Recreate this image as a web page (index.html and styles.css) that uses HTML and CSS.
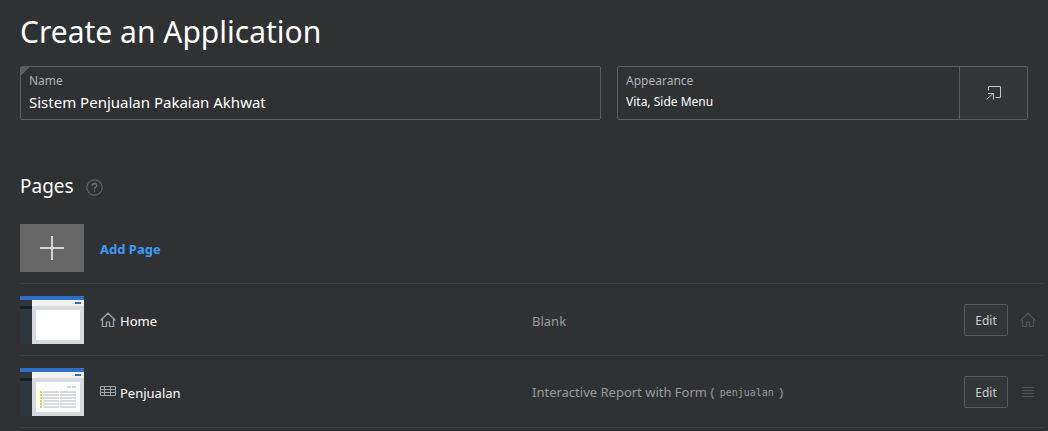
FILE: index.html
```html
<!DOCTYPE html>
<html lang="en">
<head>
<meta charset="utf-8">
<title>Create an Application</title>
<link rel="stylesheet" href="styles.css">
</head>
<body>
<svg class="defs" aria-hidden="true">
  <symbol id="home" viewBox="0 0 16 16">
    <path d="M0.5 8.5 8 1.2l7.500 7.300M2.500 7v7.500h4V10h3v4.500h4V7" fill="none" stroke="currentColor" stroke-width="1.200"/>
  </symbol>
  <symbol id="thumb" viewBox="0 0 64 48">
    <path fill="#d7dbde" d="M0 0h64v48H0z"/>
    <path fill="#2f6fcc" d="M0 0h64v4H0z"/>
    <path fill="#30373c" d="M0 4h12v44H0z"/>
    <path fill="#1b1f22" d="M0 10h12v3H0z"/>
    <path fill="#f0f1f1" d="M12 4h52v6H12z"/>
    <path fill="#2f6fcc" d="M55 6h6v2h-6z"/>
    <path fill="#fff" d="M16 14h44v30H16z"/>
  </symbol>
</svg>
<main>
  <h1 class="title">Create an Application</h1>
  <form class="settings">
    <div class="field required">
      <label class="label" for="name">Name</label>
      <input class="input" id="name" type="text" value="Sistem Penjualan Pakaian Akhwat">
    </div>
    <div class="appearance">
      <div class="field">
        <label class="label" for="appearance">Appearance</label>
        <input class="input small" id="appearance" type="text" value="Vita, Side Menu" readonly>
      </div>
      <button class="picker" type="button" aria-label="Set appearance">
        <svg width="16" height="16" viewBox="0 0 16 16" fill="none" stroke="currentColor"><path d="M2.500 5.500v-4h12v11h-5M.5 14.500l6.500-6M2 8.500h5.500v6"/></svg>
      </button>
    </div>
  </form>
  <section>
    <div class="heading">
      <h2 class="subtitle">Pages</h2>
      <button class="help" type="button" aria-label="Help">
        <svg width="17" height="17" viewBox="0 0 17 17" fill="none" stroke="currentColor"><circle cx="8.500" cy="8.500" r="7.700"/><path stroke-width="1.300" d="M6.200 6.800c0-1.500 1-2.300 2.300-2.300s2.300.8 2.300 2c0 1.600-2.300 1.700-2.300 3.500M8.500 11.300v1.400"/></svg>
      </button>
    </div>
    <ul class="pages">
      <li class="row">
        <button class="add" type="button">
          <span class="plus"><svg width="64" height="48" viewBox="0 0 64 48"><path d="M20 24h24M32 12v24" stroke="#d4d4d4" stroke-width="2"/></svg></span>
          <span class="text">Add Page</span>
        </button>
      </li>
      <li class="row">
        <svg class="thumb" viewBox="0 0 64 48"><use href="#thumb"/></svg>
        <div class="name"><svg class="icon" viewBox="0 0 16 16"><use href="#home"/></svg><span class="text">Home</span></div>
        <div class="type text">Blank</div>
        <div class="actions">
          <button class="edit" type="button">Edit</button>
          <svg class="icon mark" viewBox="0 0 16 16"><use href="#home"/></svg>
        </div>
      </li>
      <li class="row">
        <svg class="thumb" viewBox="0 0 64 48"><use href="#thumb"/>
          <path fill="#d7dbde" d="M47 18h4v2h-4zM52 18h4v2h-4z"/>
          <path stroke="#f5cb3f" stroke-width="2" d="M20 24h2M20 27h2M20 30h2M20 33h2M20 36h2M20 39h2"/>
          <path stroke="#d7dbde" stroke-width="2" d="M23 24h16m1 0h16M23 27h16m1 0h16M23 30h16m1 0h16M23 33h16m1 0h16M23 36h16m1 0h16M23 39h16m1 0h16"/>
        </svg>
        <div class="name"><svg class="icon" viewBox="0 0 16 16" fill="none" stroke="currentColor"><path d="M.5 2.500h15v9H.5zM.5 5.500h15M.5 8.500h15M4.500 2.500v9M10.500 2.500v9"/></svg><span class="text">Penjualan</span></div>
        <div class="type text">Interactive Report with Form ( <code class="code">penjualan</code> )</div>
        <div class="actions">
          <button class="edit" type="button">Edit</button>
          <svg class="icon mark" viewBox="0 0 16 16" stroke="currentColor"><path d="M2 3.500h12M2 6.500h12M2 9.500h12M2 12.500h12"/></svg>
        </div>
      </li>
    </ul>
  </section>
</main>
</body>
</html>
```
FILE: styles.css
```css
* { box-sizing: border-box; }
body {
  margin: 0;
  background: #303133;
  color: #fff;
  font: 13px/20px "Segoe UI", "Noto Sans", "Open Sans", sans-serif;
}
button, input { font: inherit; color: inherit; }
.defs { display: none; }
svg { display: block; flex: none; }
.title {
  margin: 0;
  padding: 12px 20px 14px;
  font-size: 30px;
  line-height: 40px;
  font-weight: 400;
}
.settings {
  display: grid;
  grid-template-columns: 581fr 411fr;
  gap: 16px;
  padding: 0 20px;
}
.field {
  display: flex;
  flex-direction: column;
  flex: 1;
  min-width: 0;
  padding: 6px 8px 5px;
}
.required, .appearance {
  border: 1px solid #5c5d5f;
  border-radius: 2px;
}
.required { background: linear-gradient(135deg, #5c5d5f 6px, transparent 6px); }
.appearance { display: flex; }
.label {
  color: #b2b3b4;
  font-size: 12px;
  line-height: 16px;
}
.input {
  width: 100%;
  height: 25px;
  padding: 0;
  border: 0;
  background: none;
  font-size: 15px;
}
.small { font-size: 12px; }
.picker {
  display: grid;
  place-items: center;
  width: 68px;
  border: 0;
  border-left: 1px solid #5c5d5f;
  background: #343537;
  color: #c4c5c6;
}
.heading {
  display: flex;
  align-items: center;
  gap: 12px;
  padding: 53px 20px 13px;
}
.subtitle {
  margin: 0;
  font-size: 19px;
  line-height: 26px;
  font-weight: 400;
}
.help {
  padding: 3px 0 0;
  border: 0;
  background: none;
  color: #707173;
}
.pages {
  margin: 0;
  padding: 0 4px 0 20px;
  list-style: none;
}
.row {
  display: grid;
  grid-template-columns: 64px 1fr 1fr 72px;
  align-items: center;
  column-gap: 16px;
  height: 72px;
  padding-right: 8px;
  border-bottom: 1px solid #3c3d3f;
}
.text { padding-top: 2px; }
.add {
  grid-column: 1 / 3;
  display: flex;
  align-items: center;
  gap: 16px;
  padding: 0;
  border: 0;
  background: none;
  color: #3d9bf5;
  font-size: 13px;
  font-weight: 700;
}
.plus { background: #666; }
.thumb { width: 64px; height: 48px; }
.name {
  display: flex;
  align-items: center;
  gap: 4px;
}
.icon { width: 16px; height: 16px; color: #a3a4a5; }
.type { color: #9a9b9c; }
.code {
  padding: 0 2px;
  font-family: "DejaVu Sans Mono", monospace;
  font-size: 10px;
  vertical-align: 1px;
}
.actions {
  display: flex;
  align-items: center;
  gap: 12px;
}
.edit {
  width: 44px;
  height: 32px;
  padding: 2px 0 0;
  border: 1px solid #58595b;
  border-radius: 2px;
  background: #343537;
  color: #ccc;
  font-size: 12px;
}
.mark { color: #515254; }
```
